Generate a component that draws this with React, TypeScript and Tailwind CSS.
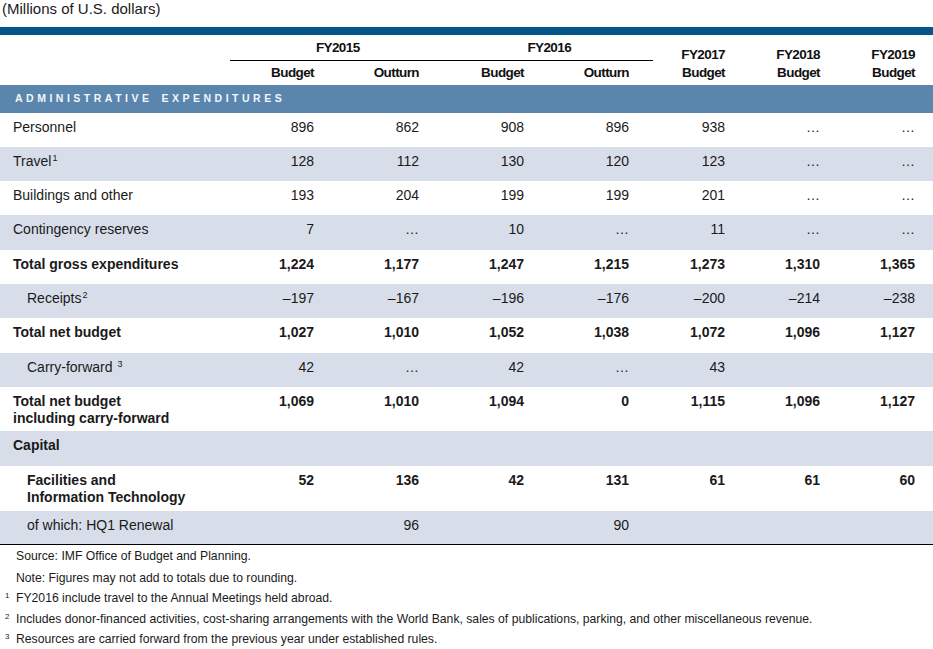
import React from 'react';

type Row = {
  label: React.ReactNode;
  values: string[];
  bold?: boolean;
  indent?: boolean;
  shaded?: boolean;
  h: string;
};

const Sup = ({ n }: { n: string }) => (
  <span className="text-[9px] leading-[11px] align-top ml-[1px]">{n}</span>
);

const rows: Row[] = [
  { label: 'Personnel', values: ['896', '862', '908', '896', '938', '…', '…'], h: 'h-[34px]' },
  { label: <>Travel<Sup n="1" /></>, values: ['128', '112', '130', '120', '123', '…', '…'], shaded: true, h: 'h-[34px]' },
  { label: 'Buildings and other', values: ['193', '204', '199', '199', '201', '…', '…'], h: 'h-[34px]' },
  { label: 'Contingency reserves', values: ['7', '…', '10', '…', '11', '…', '…'], shaded: true, h: 'h-[35px]' },
  { label: 'Total gross expenditures', values: ['1,224', '1,177', '1,247', '1,215', '1,273', '1,310', '1,365'], bold: true, h: 'h-[34px]' },
  { label: <>Receipts<Sup n="2" /></>, values: ['–197', '–167', '–196', '–176', '–200', '–214', '–238'], indent: true, shaded: true, h: 'h-[34px]' },
  { label: 'Total net budget', values: ['1,027', '1,010', '1,052', '1,038', '1,072', '1,096', '1,127'], bold: true, h: 'h-[35px]' },
  { label: <>Carry-forward <Sup n="3" /></>, values: ['42', '…', '42', '…', '43', '', ''], indent: true, shaded: true, h: 'h-[34px]' },
  {
    label: <>Total net budget<br />including carry-forward</>,
    values: ['1,069', '1,010', '1,094', '0', '1,115', '1,096', '1,127'],
    bold: true,
    h: 'h-[44px]'
  },
  { label: 'Capital', values: ['', '', '', '', '', '', ''], bold: true, shaded: true, h: 'h-[35px]' },
  {
    label: <>Facilities and<br />Information Technology</>,
    values: ['52', '136', '42', '131', '61', '61', '60'],
    bold: true,
    indent: true,
    h: 'h-[45px]'
  },
  { label: 'of which: HQ1 Renewal', values: ['', '96', '', '90', '', '', ''], indent: true, shaded: true, h: 'h-[33px]' }
];

// right padding for each numeric column
const pads = ['pr-[11px]', 'pr-[11px]', 'pr-[11px]', 'pr-[11px]', 'pr-[10px]', 'pr-[10px]', 'pr-[18px]'];

const cols = 'grid grid-cols-[220px_105px_105px_105px_105px_95px_95px_1fr]';
const cond = "font-['Liberation_Sans',Arial,sans-serif] font-bold text-[13.5px] tracking-[-0.6px] text-[#111]";

export default function App() {
  return (
    <div className="w-[933px] h-[649px] bg-white font-['Liberation_Sans',Arial,sans-serif] text-[#1a1a1a] overflow-hidden">
      {/* Title */}
      <div className="h-[27px] pl-[2px] text-[15px] leading-[18px]">(Millions of U.S. dollars)</div>
      <div className="h-[8px] bg-[#03568a]" />

      {/* Column headers */}
      <div className={`${cols} grid-rows-[26px_24px] ${cond}`}>
        <div className="col-start-2 col-span-4 ml-[10px] -mr-[13px] border-b border-black flex pt-[5px] leading-[16px]">
          <div className="flex-1 text-center pl-[4px]">FY2015</div>
          <div className="flex-1 text-center pl-[4px]">FY2016</div>
        </div>
        {['FY2017', 'FY2018', 'FY2019'].map((fy, i) => (
          <div
            key={fy}
            className={`row-span-2 flex flex-col items-end justify-end pb-[3px] leading-[18px] ${pads[i + 4]}`}
          >
            <span>{fy}</span>
            <span>Budget</span>
          </div>
        ))}
        {['Budget', 'Outturn', 'Budget', 'Outturn'].map((t, i) => (
          <div
            key={i}
            className={`row-start-2 text-right pt-[4px] leading-[16px] ${pads[i]}`}
            style={{ gridColumnStart: i + 2 }}
          >
            {t}
          </div>
        ))}
      </div>

      {/* Section band */}
      <div className="h-[28px] bg-[#5a85ad] flex items-center pl-[15px] text-[10.5px] font-bold text-[#f4f6f8] tracking-[3.5px]">
        <span>ADMINISTRATIVE</span>
        <span className="ml-[9px]">EXPENDITURES</span>
      </div>

      {/* Body */}
      <div className="border-b border-black">
        {rows.map((r, i) => (
          <div
            key={i}
            className={`${cols} ${r.h} ${r.shaded ? 'bg-[#d8dee9]' : 'bg-white'} text-[14px] leading-[17px] pt-[6px] ${r.bold ? 'font-bold' : ''}`}
          >
            <div className={r.indent ? 'pl-[27px]' : 'pl-[13px]'}>{r.label}</div>
            {r.values.map((v, j) => (
              <div key={j} className={`text-right ${pads[j]}`}>
                {v}
              </div>
            ))}
          </div>
        ))}
      </div>

      {/* Notes */}
      <div className="text-[12.2px] leading-[20.5px] pt-[1px] text-[#1a1a1a]">
        <div className="pl-[16px]">Source: IMF Office of Budget and Planning.</div>
        <div className="pl-[16px] mt-[1px]">Note: Figures may not add to totals due to rounding.</div>
        {[
          ['1', 'FY2016 include travel to the Annual Meetings held abroad.'],
          ['2', 'Includes donor-financed activities, cost-sharing arrangements with the World Bank, sales of publications, parking, and other miscellaneous revenue.'],
          ['3', 'Resources are carried forward from the previous year under established rules.']
        ].map(([n, t]) => (
          <div key={n} className="flex pl-[5px]">
            <span className="w-[11px] text-[8px] leading-[15px]">{n}</span>
            <span>{t}</span>
          </div>
        ))}
      </div>
    </div>
  );
}
